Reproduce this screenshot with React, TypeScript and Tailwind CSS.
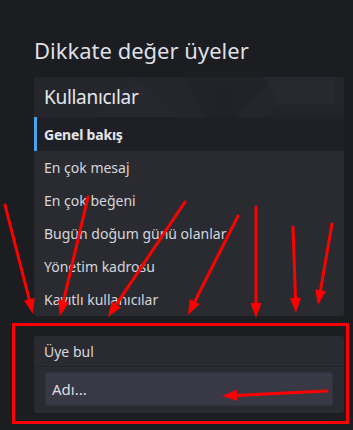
import React from "react";

const rows = [
  "En çok mesaj",
  "En çok beğeni",
  "Bugün doğum günü olanlar",
  "Yönetim kadrosu",
  "Kayıtlı kullanıcılar",
];

type Arrow = { x1: number; y1: number; x2: number; y2: number };
const arrows: Arrow[] = [
  { x1: 5, y1: 205, x2: 33, y2: 314 },
  { x1: 88, y1: 197, x2: 60, y2: 316 },
  { x1: 185, y1: 202, x2: 108, y2: 317 },
  { x1: 238, y1: 216, x2: 188, y2: 315 },
  { x1: 256, y1: 207, x2: 256, y2: 318 },
  { x1: 293, y1: 227, x2: 296, y2: 313 },
  { x1: 332, y1: 224, x2: 318, y2: 305 },
  { x1: 327, y1: 391, x2: 222, y2: 396 },
];

function ArrowShape({ a }: { a: Arrow }) {
  const dx = a.x2 - a.x1;
  const dy = a.y2 - a.y1;
  const len = Math.sqrt(dx * dx + dy * dy);
  const ux = dx / len;
  const uy = dy / len;
  const head = 15;
  const half = 5.5;
  const bx = a.x2 - ux * head;
  const by = a.y2 - uy * head;
  const px = -uy;
  const py = ux;
  return (
    <g>
      <line x1={a.x1} y1={a.y1} x2={bx + ux * 2} y2={by + uy * 2} stroke="#ff0000" strokeWidth={3} strokeLinecap="round" />
      <polygon
        points={`${a.x2},${a.y2} ${bx + px * half},${by + py * half} ${bx - px * half},${by - py * half}`}
        fill="#ff0000"
      />
    </g>
  );
}

export default function App() {
  const font = { fontFamily: '"Noto Sans", "Open Sans", sans-serif' };
  return (
    <div className="relative w-[353px] h-[430px] overflow-hidden bg-[#1c1d21] pl-[34px] pr-[9px]" style={font}>
      <h1 className="pt-[35px] h-[77px] text-[22px] leading-[30px] text-[#dfdfe6] font-normal">
        Dikkate değer üyeler
      </h1>

      <div className="rounded-[3px] overflow-hidden bg-[#2a2b31]">
        <div className="relative h-[40px] bg-[#25262c] overflow-hidden flex items-center pl-[10px]">
          <svg className="absolute inset-0" width="310" height="40" viewBox="0 0 310 40">
            <polygon points="100,0 145,40 60,40" fill="#292a31" opacity="0.5" />
            <polygon points="150,0 240,0 200,40 170,40" fill="#212228" opacity="0.6" />
            <polygon points="190,0 205,40 175,40" fill="#1f2026" opacity="0.4" />
            <polygon points="230,0 300,0 300,27 246,27" fill="#2a2b32" opacity="0.7" />
            <polygon points="246,27 310,27 310,40 230,40" fill="#222329" opacity="0.7" />
          </svg>
          <span className="relative text-[19px] text-[#e6e6ec] tracking-[-0.3px]">Kullanıcılar</span>
        </div>
        <div className="h-[34px] bg-[#1f2026] border-l-[3px] border-[#4aa3ea] flex items-center pl-[7px]">
          <span className="text-[14px] font-bold text-[#e4e4ea] tracking-[-0.2px]">Genel bakış</span>
        </div>
        {rows.map((r) => (
          <div key={r} className="h-[33px] flex items-center pl-[10px]">
            <span className="text-[14px] text-[#d6d6dc]">{r}</span>
          </div>
        ))}
      </div>

      <div className="mt-[20px] rounded-[3px] bg-[#2a2b31] overflow-hidden">
        <div className="h-[31px] flex items-center pl-[10px] border-b border-[#232429]">
          <span className="text-[14px] text-[#d6d6dc]">Üye bul</span>
        </div>
        <div className="px-[11px] pt-[5px] pb-[7px]">
          <div className="h-[34px] rounded-[3px] bg-[#383945] border border-[#32333d] flex items-center pl-[6px]">
            <span className="text-[15px] text-[#dcdce4]">Adı...</span>
          </div>
        </div>
      </div>

      <div className="absolute left-[12px] top-[323px] w-[337px] h-[101px] border-[3px] border-[#ff0000] pointer-events-none" />
      <svg className="absolute left-0 top-0 pointer-events-none" width="353" height="430" viewBox="0 0 353 430">
        {arrows.map((a, i) => (
          <ArrowShape key={i} a={a} />
        ))}
      </svg>
    </div>
  );
}
